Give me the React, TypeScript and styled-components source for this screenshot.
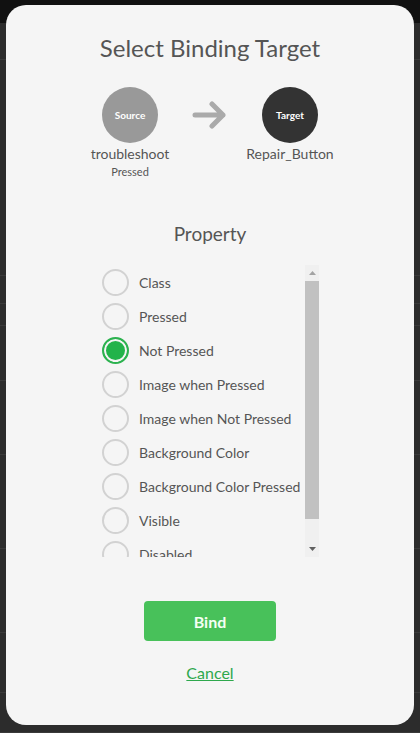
import styled, { createGlobalStyle } from 'styled-components';
import { useState } from 'react';

const GlobalStyle = createGlobalStyle`
    html, body {
        margin: 0;
        padding: 0;
        background: #2b2b2b;
        font-family: "Lato", "Open Sans", sans-serif;
        overflow: hidden;
    }
`;

const Backdrop = styled.div`
    width: 420px;
    height: 733px;
    display: flex;
    flex-direction: column;
    background: #2c2c2c;
`;

const TopBar = styled.div`
    height: 24px;
    background: #111111;
`;

const BackRow = styled.div<{h: number}>`
    height: ${props => props.h}px;
    border-bottom: 1px solid #3a3a3a;
`;

const Modal = styled.div`
    position: fixed;
    left: 6px;
    top: 5px;
    width: 408px;
    height: 720px;
    background: #f5f5f5;
    border-radius: 20px;
    display: flex;
    flex-direction: column;
    align-items: center;
    box-sizing: border-box;
    padding-top: 28px;
`;

const Title = styled.h1`
    margin: 0;
    font-size: 24px;
    font-weight: 400;
    line-height: 30px;
    color: #555555;
`;

const BindingRow = styled.div`
    margin-top: 24px;
    display: flex;
    align-items: flex-start;
    justify-content: center;
    width: 408px;
`;

const Node = styled.div`
    width: 110px;
    display: flex;
    flex-direction: column;
    align-items: center;
`;

const Circle = styled.div<{dark?: boolean}>`
    width: 56px;
    height: 56px;
    border-radius: 50%;
    background: ${props => props.dark ? "#333333" : "#999999"};
    color: #ffffff;
    font-size: 10px;
    font-weight: 700;
    display: flex;
    align-items: center;
    justify-content: center;
`;

const NodeName = styled.div`
    margin-top: 2px;
    font-size: 14px;
    line-height: 18px;
    color: #555555;
`;

const NodeSub = styled.div`
    margin-top: 2px;
    font-size: 11px;
    line-height: 14px;
    color: #555555;
`;

const ArrowBox = styled.div`
    width: 50px;
    height: 56px;
    display: flex;
    align-items: center;
    justify-content: center;
`;

const SectionTitle = styled.h2`
    margin: 42px 0 0 0;
    font-size: 19px;
    font-weight: 400;
    line-height: 26px;
    color: #555555;
`;

const ListFrame = styled.div`
    margin-top: 18px;
    width: 218px;
    height: 292px;
    display: flex;
    overflow: hidden;
`;

const List = styled.div`
    flex: 1;
    overflow: hidden;
    display: flex;
    flex-direction: column;
`;

const Row = styled.label`
    height: 34px;
    flex-shrink: 0;
    display: flex;
    align-items: center;
    gap: 10px;
    padding-left: 1px;
    cursor: pointer;
    font-size: 14px;
    color: #555555;
    white-space: nowrap;
`;

const Radio = styled.span<{checked?: boolean}>`
    width: 27px;
    height: 27px;
    box-sizing: border-box;
    border-radius: 50%;
    flex-shrink: 0;
    border: 2px solid ${props => props.checked ? "#2cb24f" : "#d2d2d2"};
    background: ${props => props.checked ? "#22b34a" : "transparent"};
    box-shadow: ${props => props.checked ? "inset 0 0 0 2px #f5f5f5" : "none"};
`;

const ScrollTrack = styled.div`
    width: 14px;
    flex-shrink: 0;
    background: #f0f0f0;
    display: flex;
    flex-direction: column;
`;

const ScrollButton = styled.div`
    height: 16px;
    display: flex;
    align-items: center;
    justify-content: center;
`;

const Thumb = styled.div`
    height: 238px;
    background: #c1c1c1;
`;

const Spacer = styled.div`
    flex: 1;
`;

const BindButton = styled.button`
    margin-top: 44px;
    width: 132px;
    height: 40px;
    border: none;
    border-radius: 4px;
    background: #48c15a;
    color: #f4fff4;
    font-family: inherit;
    font-size: 16px;
    font-weight: 700;
    cursor: pointer;
`;

const CancelLink = styled.a`
    margin-top: 22px;
    font-size: 16px;
    color: #2ea84d;
    text-decoration: underline;
    cursor: pointer;
`;

const properties = [
    "Class",
    "Pressed",
    "Not Pressed",
    "Image when Pressed",
    "Image when Not Pressed",
    "Background Color",
    "Background Color Pressed",
    "Visible",
    "Disabled",
    "Enabled",
];

const backRows = [36, 220, 28, 22, 55, 75, 95, 85, 60, 40];

const App = () => {
    const [selected, setSelected] = useState<string>("Not Pressed");

    return(
        <>
            <GlobalStyle/>
            <Backdrop>
                <TopBar/>
                {backRows.map((h, i) => <BackRow key={i} h={h}/>)}
            </Backdrop>
            <Modal>
                <Title>Select Binding Target</Title>
                <BindingRow>
                    <Node>
                        <Circle>Source</Circle>
                        <NodeName>troubleshoot</NodeName>
                        <NodeSub>Pressed</NodeSub>
                    </Node>
                    <ArrowBox>
                        <svg width="36" height="28" viewBox="0 0 36 28">
                            <path d="M3 14 H31 M20 3 L31 14 L20 25" fill="none" stroke="#aaaaaa" strokeWidth="5" strokeLinecap="round" strokeLinejoin="round"/>
                        </svg>
                    </ArrowBox>
                    <Node>
                        <Circle dark={true}>Target</Circle>
                        <NodeName>Repair_Button</NodeName>
                    </Node>
                </BindingRow>
                <SectionTitle>Property</SectionTitle>
                <ListFrame>
                    <List>
                        {properties.map(p => (
                            <Row key={p} onClick={() => setSelected(p)}>
                                <Radio checked={selected == p}/>
                                {p}
                            </Row>
                        ))}
                    </List>
                    <ScrollTrack>
                        <ScrollButton>
                            <svg width="7" height="4" viewBox="0 0 7 4"><path d="M0 4 L3.5 0 L7 4 Z" fill="#a3a3a3"/></svg>
                        </ScrollButton>
                        <Thumb/>
                        <Spacer/>
                        <ScrollButton>
                            <svg width="7" height="4" viewBox="0 0 7 4"><path d="M0 0 L3.5 4 L7 0 Z" fill="#606060"/></svg>
                        </ScrollButton>
                    </ScrollTrack>
                </ListFrame>
                <BindButton>Bind</BindButton>
                <CancelLink>Cancel</CancelLink>
            </Modal>
        </>
    );
}

export default App;
